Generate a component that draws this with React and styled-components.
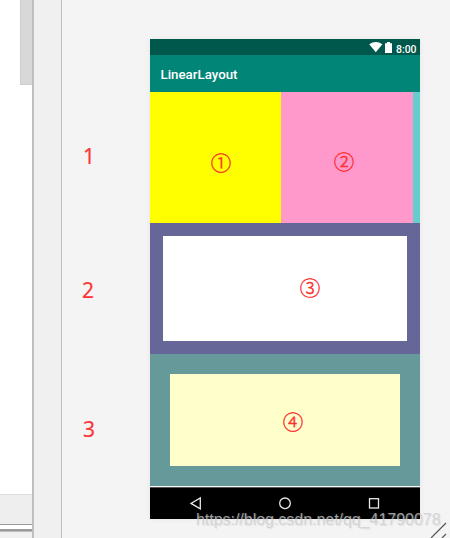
import styled, { createGlobalStyle } from "styled-components";

const GlobalStyle = createGlobalStyle`
  * {
    box-sizing: border-box;
  }
  body {
    margin: 0;
    overflow: hidden;
    background: #f4f4f4;
  }
`;

const Page = styled.div`
  position: relative;
  display: flex;
  width: 450px;
  height: 538px;
  overflow: hidden;
  font-family: Roboto, sans-serif;
`;

const Editor = styled.div`
  display: flex;
  flex-direction: column;
  width: 32px;
  background: #fff;
`;

const ScrollArea = styled.div`
  height: 494px;
`;

const ScrollThumb = styled.div`
  width: 12px;
  height: 85px;
  margin-left: 20px;
  background: #d8d8d8;
  border: 1px solid #cecece;
  border-width: 0 0 1px 1px;
`;

const EditorFooter = styled.div`
  height: 31px;
  background: #eee;
  border-top: 1px solid #dcdcdc;
  border-bottom: 1px solid #9b9b9b;
`;

const EditorSplit = styled.div`
  height: 3px;
  margin-top: 4px;
  background: linear-gradient(#999 2px, #bbb 2px);
`;

const EditorRest = styled.div`
  flex: 1;
  background: #f0f0f0;
`;

const Gutter = styled.div`
  width: 30px;
  background: #f0f0f0;
  border-left: 2px solid #bfbfbf;
  border-right: 1px solid #bfbfbf;
`;

const Canvas = styled.div`
  display: flex;
  flex: 1;
  background: #f4f4f4;
`;

const Labels = styled.div`
  display: flex;
  flex-direction: column;
  width: 88px;
  padding-top: 141px;
`;

const Label = styled.span`
  height: 30px;
  margin-bottom: ${({ $gap }) => $gap || 0}px;
  padding-left: ${({ $indent }) => $indent}px;
  color: #fb3838;
  font: 21px/30px "Noto Sans", sans-serif;
  -webkit-text-stroke: 0.2px #fb3838;
`;

const Phone = styled.div`
  display: flex;
  flex-direction: column;
  width: 270px;
  height: 480px;
  margin-top: 39px;
  background: #fafafa;
  box-shadow: 0 0 6px rgba(0, 0, 0, 0.06);
`;

const StatusBar = styled.div`
  display: flex;
  justify-content: flex-end;
  height: 16px;
  padding-right: 3.5px;
  background: #00574b;
  color: #fff;
  font-size: 10.4px;
  font-weight: 500;
  line-height: 21px;
`;

const StatusIcons = styled.svg`
  width: 27px;
  height: 16px;
`;

const AppBar = styled.div`
  height: 37px;
  padding-left: 10.5px;
  background: #008577;
  color: #fff;
  font-size: 13.3px;
  font-weight: 500;
  line-height: 39px;
`;

const Row = styled.div`
  position: relative;
  display: flex;
  height: ${({ $height }) => $height}px;
  padding: ${({ $padding }) => $padding || 0};
  background: ${({ $color }) => $color};
`;

const Block = styled.div`
  flex: ${({ $width }) => ($width ? `0 0 ${$width}px` : 1)};
  background: ${({ $color }) => $color};
`;

const Mark = styled.span`
  position: absolute;
  left: ${({ $x }) => $x}px;
  top: ${({ $y }) => $y}px;
  width: 24px;
  color: #fb3030;
  font: 300 20.5px/24px "Noto Sans CJK SC", sans-serif;
  text-align: center;
  -webkit-text-stroke: 0.45px #fb3030;
`;

const NavBar = styled.div`
  height: 32px;
  margin-top: auto;
  background: #000;
  border-top: 1px solid #555;
`;

const Watermark = styled.div`
  position: absolute;
  left: 196px;
  top: 510px;
  color: rgba(205, 205, 205, 0.75);
  font: 16px/20px "Liberation Sans", sans-serif;
  letter-spacing: -0.03px;
  text-shadow: 1px 1px 1px rgba(190, 190, 190, 0.3);
  white-space: nowrap;
`;

const Grip = styled.svg`
  position: absolute;
  right: 0;
  bottom: 0;
`;

const App = () => (
  <Page>
    <GlobalStyle />
    <Editor>
      <ScrollArea>
        <ScrollThumb />
      </ScrollArea>
      <EditorFooter />
      <EditorSplit />
      <EditorRest />
    </Editor>
    <Gutter />
    <Canvas>
      <Labels>
        <Label $indent={21} $gap={104}>1</Label>
        <Label $indent={20} $gap={109}>2</Label>
        <Label $indent={21}>3</Label>
      </Labels>
      <Phone>
        <StatusBar>
          <StatusIcons viewBox="0 0 27 16" fill="#fff">
            <path d="M.2 5.2Q6.8.7 13.4 5.2L6.8 13.3Z" />
            <path d="M16 4.2h2V3h3v1.2h2V14h-7z" />
          </StatusIcons>
          8:00
        </StatusBar>
        <AppBar>LinearLayout</AppBar>
        <Row $height={131} $color="#66cccc">
          <Block $width={131} $color="#ffff00" />
          <Block $width={132} $color="#ff99cc" />
          <Mark $x={59} $y={58}>①</Mark>
          <Mark $x={182} $y={57}>②</Mark>
        </Row>
        <Row $height={131} $color="#666699" $padding="13px">
          <Block $color="#fff" />
          <Mark $x={148} $y={52}>③</Mark>
        </Row>
        <Row $height={132} $color="#669999" $padding="20px 20px 20px 19.5px">
          <Block $color="#ffffcc" />
          <Mark $x={131} $y={55}>④</Mark>
        </Row>
        <NavBar>
          <svg width="270" height="31" fill="none" stroke="#e8e8e8" strokeWidth="1.3">
            <path d="M50.3 10v10.8L41 15.4Z" />
            <circle cx="135" cy="15.3" r="5.3" />
            <rect x="219.5" y="10.7" width="9" height="9.3" />
          </svg>
        </NavBar>
      </Phone>
    </Canvas>
    <Watermark>https://blog.csdn.net/qq_41790078</Watermark>
    <Grip width="20" height="16" stroke="#555" strokeWidth="1.2">
      <path d="M1 16L16 1M12 16L16 12" />
    </Grip>
  </Page>
);

export default App;
